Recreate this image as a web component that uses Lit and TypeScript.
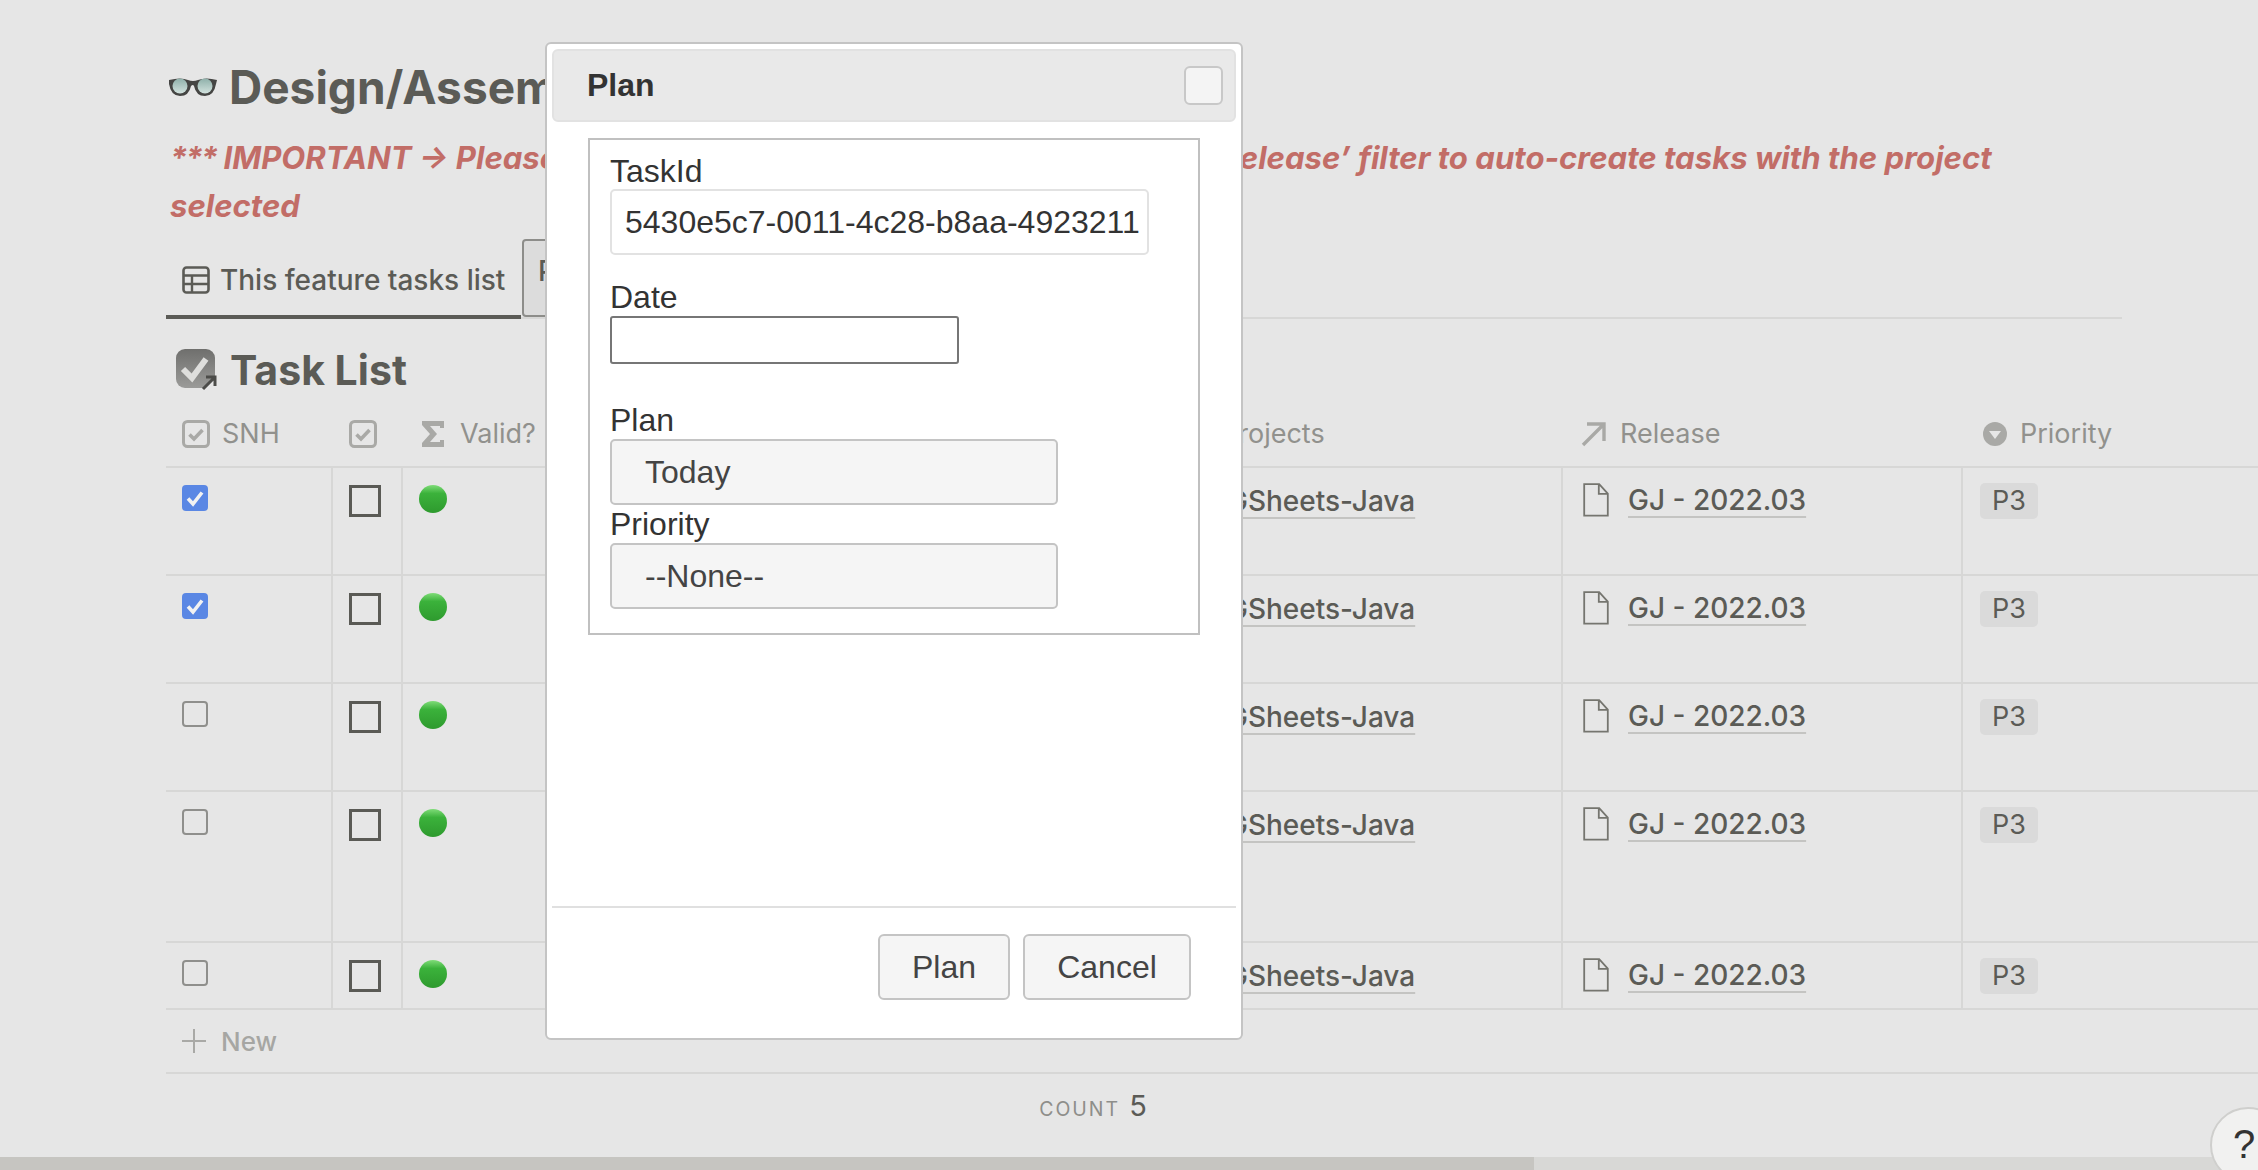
import { LitElement, html, css, svg } from "lit";
import { customElement } from "lit/decorators.js";

const checkHead = svg`<svg class="hicon" viewBox="0 0 28 28"><rect x="1.5" y="1.5" width="25" height="25" rx="4" fill="none" stroke="#a9a9a6" stroke-width="3"/><path d="M7.5 14.5l4.500 4.500 8.500-9" fill="none" stroke="#a9a9a6" stroke-width="3.6"/></svg>`;

const docIcon = svg`<svg class="doc" viewBox="0 0 26 34"><path d="M1.2 1.2h15l8.6 9.5v22H1.2z M15.8 1.2v9.6h9" fill="none" stroke="#75756f" stroke-width="1.8"/></svg>`;

interface Row { height: number; checked: boolean; }
const rows: Row[] = [
  { height: 106, checked: true },
  { height: 106, checked: true },
  { height: 106, checked: false },
  { height: 149, checked: false },
  { height: 65, checked: false },
];

@customElement("app-root")
export class AppRoot extends LitElement {
  static styles = css`
    :host { display: block; width: 2258px; height: 1170px; position: relative; overflow: hidden; background: #e6e6e6; font-family: Inter, "Liberation Sans", sans-serif; color: #5b5b56; }
    .page { display: flex; flex-direction: column; padding: 56px 0 0 166px; height: 1170px; box-sizing: border-box; }
    .title { display: flex; align-items: center; gap: 11px; height: 62px; font-size: 46px; font-weight: 700; white-space: nowrap; padding-left: 2px; }
    .glasses { width: 50px; height: 24px; flex: none; }
    .note { width: 1840px; margin: 17px 0 0 4px; font-size: 31.1px; line-height: 47.5px; font-style: italic; font-weight: 700; color: #c26d67; }
    .stars { letter-spacing: -2px; }
    .tabs { display: flex; width: 1956px; height: 78px; margin-top: 9px; border-bottom: 2px solid #d7d7d6; }
    .tab { display: flex; align-items: center; gap: 10px; padding: 6px 14px 0 16px; font-size: 28px; font-weight: 500; width: 355px; box-sizing: border-box; height: 80px; border-bottom: 4px solid #5b5b56; white-space: nowrap; }
    .tab svg { width: 28px; height: 28px; flex: none; }
    .tab2 { border: 2px solid #8d8d8a; border-radius: 4px; background: #dcdcdc; width: 80px; height: 78px; box-sizing: border-box; padding: 13px 14px; font-size: 28px; font-weight: 500; margin-left: 1px; }
    .h2 { display: flex; align-items: center; gap: 11px; height: 58px; margin: 22px 0 0 9px; font-size: 41px; font-weight: 700; }
    .h2 svg { width: 44px; height: 44px; }
    .table { margin-top: 6px; display: grid; grid-template-columns: 167px 70px 767px 393px 400px 295px; width: 2092px; }
    .hcell { height: 61px; display: flex; align-items: center; gap: 12px; padding: 0 0 4px 16px; box-sizing: border-box; font-size: 27px; color: #91918d; white-space: nowrap; }
    .hicon { width: 28px; height: 28px; flex: none; }
    .hsum { gap: 15px; }
    .sigma { width: 24px; margin-left: 2px; }
    .hproj { margin-left: 35px; }
    .hrel { padding-left: 18px; gap: 13px; }
    .arrow { width: 26px; }
    .hpri { padding-left: 20px; gap: 13px; }
    .tri { width: 24px; height: 24px; }
    .line { grid-column: 1 / -1; height: 2px; background: #d7d7d6; }
    .cell { border-right: 2px solid #d7d7d6; box-sizing: border-box; padding: 17px 0 0 16px; }
    .cell.last { border-right: 0; }
    .cell.proj { padding: 16px 0 0 57px; }
    .check { display: block; width: 26px; height: 26px; border-radius: 4px; box-sizing: border-box; border: 2px solid #8f8f8c; }
    .check.on { background: #5a87e4; border: 0; }
    .check svg { display: block; width: 26px; height: 26px; }
    .square { width: 32px; height: 32px; box-sizing: border-box; border: 3px solid #5a5a55; }
    .dot { width: 28px; height: 28px; border-radius: 50%; background: linear-gradient(#7fdc78 0, #3bb23b 30%, #2e9a2e 100%); }
    .link { font-size: 28px; font-weight: 500; color: #5b5b56; text-decoration: underline; text-decoration-color: #c4c4c2; text-decoration-thickness: 2px; text-underline-offset: 6px; white-space: nowrap; }
    .cell.rel { display: flex; gap: 19px; align-items: flex-start; padding: 15px 0 0 20px; }
    .doc { width: 26px; height: 34px; flex: none; }
    .tag { display: block; width: fit-content; background: #dadada; border-radius: 5px; font-size: 27px; font-weight: 400; line-height: 36px; padding: 0 12px; margin: -2px 0 0 1px; }
    .new { display: flex; align-items: center; gap: 15px; height: 62px; padding-left: 16px; font-size: 26px; font-weight: 500; color: #a6a6a3; }
    .new svg { width: 24px; height: 24px; }
    .bline { height: 2px; width: 2092px; background: #d7d7d6; }
    .count { display: flex; align-items: baseline; justify-content: center; gap: 9px; width: 1854px; height: 66px; padding-top: 14px; box-sizing: border-box; font-size: 19.5px; letter-spacing: 2px; color: #8e8e8a; }
    .count b { font-size: 29px; font-weight: 400; color: #5b5b56; letter-spacing: 0; }
    .scroll { position: absolute; left: 0; right: 0; bottom: 0; height: 13px; background: #d8d8d6; }
    .thumb { width: 1534px; height: 13px; background: #c6c5c1; }
    .help { position: absolute; left: 2210px; top: 1107px; width: 76px; height: 76px; border-radius: 50%; box-sizing: border-box; background: #f1f1f0; border: 2px solid #cfcfcd; color: #333; font-size: 40px; font-family: "Liberation Sans", sans-serif; padding: 13px 0 0 21px; }

    .dialog { position: absolute; left: 545px; top: 42px; width: 698px; height: 998px; box-sizing: border-box; background: #fff; border: 2px solid #c4c4c4; border-radius: 6px; padding: 5px; display: flex; flex-direction: column; font-family: "Liberation Sans", Arial, sans-serif; color: #333; font-size: 32px; }
    .dhead { height: 73px; flex: none; box-sizing: border-box; background: #e9e9e9; border: 2px solid #e2e2e2; border-radius: 6px; display: flex; align-items: center; justify-content: space-between; padding: 0 11px 0 33px; font-weight: 700; }
    .close { width: 39px; height: 39px; box-sizing: border-box; background: #f4f4f4; border: 2px solid #c8c8c8; border-radius: 6px; padding: 0; }
    .fieldset { flex: none; box-sizing: border-box; margin: 16px 0 0 36px; width: 612px; height: 497px; border: 2px solid #c0c0c0; padding: 12px 0 0 20px; display: flex; flex-direction: column; }
    label { display: block; line-height: 38px; height: 38px; }
    input { display: block; box-sizing: border-box; font: inherit; color: #333; outline: none; }
    .task { width: 539px; height: 66px; border: 2px solid #e2e2e2; border-radius: 5px; padding: 0 8px 0 13px; margin: -1px 0 23px; }
    .date { width: 349px; height: 48px; border: 2px solid #767676; border-radius: 3px; margin: 0 0 37px; padding: 0 10px; }
    .sel { display: block; box-sizing: border-box; width: 448px; height: 66px; background: #f5f5f5; border: 2px solid #c4c4c4; border-radius: 5px; font: inherit; color: #444; text-align: left; padding: 0 0 0 33px; margin: 0; }
    .dspacer { flex: 1; }
    .dfoot { flex: none; height: 127px; border-top: 2px solid #e0e0e0; box-sizing: border-box; display: flex; justify-content: flex-end; gap: 13px; padding: 26px 45px 0 0; }
    .btn { height: 66px; box-sizing: border-box; background: #f5f5f5; border: 2px solid #c4c4c4; border-radius: 6px; font: inherit; color: #444; padding: 0; }
    .b1 { width: 132px; } .b2 { width: 168px; }
  `;

  render() {
    const cols = rows.map((r, i) => html`
      <div class="cell" style="height:${r.height}px"><span class="check ${r.checked ? "on" : ""}">${r.checked ? svg`<svg viewBox="0 0 26 26"><path d="M6 13.5l5 5.500 9-11.500" fill="none" stroke="#f2f2f2" stroke-width="3.6"/></svg>` : ""}</span></div>
      <div class="cell"><div class="square"></div></div>
      <div class="cell"><div class="dot"></div></div>
      <div class="cell proj"><span class="link">GSheets-Java</span></div>
      <div class="cell rel">${docIcon}<span class="link">GJ - 2022.03</span></div>
      <div class="cell last"><span class="tag">P3</span></div>
      ${i < rows.length - 1 ? html`<div class="line"></div>` : ""}
    `);
    return html`
      <div class="page">
        <div class="title">
          <svg class="glasses" viewBox="0 0 50 24">
            <defs><linearGradient id="lens" x1="0" y1="0" x2="0" y2="1"><stop offset="0" stop-color="#8fb0aa"/><stop offset="1" stop-color="#d2e2de"/></linearGradient></defs>
            <path d="M1 5q12-3 19 0q5 2 10 0q8-3 19 0l-1 4q-2 12-11 12q-9 0-11-10q-1-2-3 0q-2 10-11 10q-9 0-11-12z" fill="#454543"/>
            <ellipse cx="12" cy="11" rx="7.5" ry="7.5" fill="url(#lens)"/><ellipse cx="37" cy="11" rx="7.5" ry="7.5" fill="url(#lens)"/>
          </svg>
          <span>Design/Assembly</span>
        </div>
        <div class="note"><span class="stars">***</span> IMPORTANT → Please add new tasks under this feature from the ‘Release’ filter to auto-create tasks with the project selected</div>
        <div class="tabs">
          <div class="tab">
            <svg viewBox="0 0 28 28"><rect x="1.5" y="1.5" width="25" height="25" rx="3" fill="none" stroke="#5b5b56" stroke-width="2.6"/><path d="M1.5 9.5h25M1.5 18h25M10 9.5v17" stroke="#5b5b56" stroke-width="2.4" fill="none"/></svg>
            <span>This feature tasks list</span>
          </div>
          <div class="tab2">P</div>
        </div>
        <div class="h2">
          <svg viewBox="0 0 44 44">
            <defs><linearGradient id="tl" x1="0" y1="0" x2="0" y2="1"><stop offset="0" stop-color="#6f6f6d"/><stop offset="1" stop-color="#9b9b99"/></linearGradient></defs>
            <rect x="1" y="1" width="39" height="39" rx="9" fill="url(#tl)"/>
            <path d="M8 21l9 9 14-19" fill="none" stroke="#dededc" stroke-width="6"/>
            <path d="M27 43l15-15v12H30z" fill="#e6e6e6" />
            <path d="M28 41l12-12M31 29h9v9" fill="none" stroke="#4c4c49" stroke-width="3"/>
          </svg>
          <span>Task List</span>
        </div>
        <div class="table">
          <div class="hcell">${checkHead}<span>SNH</span></div>
          <div class="hcell">${checkHead}</div>
          <div class="hcell hsum"><svg class="hicon sigma" viewBox="0 0 24 28"><path d="M1 1h22v7h-4V6H9l7 8-7 8h10v-2h4v7H1v-4l8-9-8-9z" fill="#a9a9a6"/></svg><span>Valid?</span></div>
          <div class="hcell"><span class="hproj">Projects</span></div>
          <div class="hcell hrel"><svg class="hicon arrow" viewBox="0 0 26 26"><path d="M2 24L23 3M6 3h17v17" fill="none" stroke="#a9a9a6" stroke-width="3.4"/></svg><span>Release</span></div>
          <div class="hcell hpri"><svg class="hicon tri" viewBox="0 0 24 24"><circle cx="12" cy="12" r="12" fill="#a9a9a6"/><path d="M6 9h12l-6 8z" fill="#e6e6e6"/></svg><span>Priority</span></div>
          <div class="line"></div>
          ${cols}
        </div>
        <div class="bline"></div>
        <div class="new"><svg viewBox="0 0 24 24"><path d="M12 0v24M0 12h24" stroke="#a9a9a6" stroke-width="2" fill="none"/></svg><span>New</span></div>
        <div class="bline"></div>
        <div class="count"><span>COUNT</span><b>5</b></div>
      </div>
      <div class="scroll"><div class="thumb"></div></div>
      <div class="help">?</div>
      <div class="dialog">
        <div class="dhead"><span>Plan</span><button class="close"></button></div>
        <div class="fieldset">
          <label>TaskId</label>
          <input class="task" value="5430e5c7-0011-4c28-b8aa-49232114a7c1" />
          <label>Date</label>
          <input class="date" />
          <label>Plan</label>
          <button class="sel">Today</button>
          <label>Priority</label>
          <button class="sel">--None--</button>
        </div>
        <div class="dspacer"></div>
        <div class="dfoot">
          <button class="btn b1">Plan</button>
          <button class="btn b2">Cancel</button>
        </div>
      </div>
    `;
  }
}
